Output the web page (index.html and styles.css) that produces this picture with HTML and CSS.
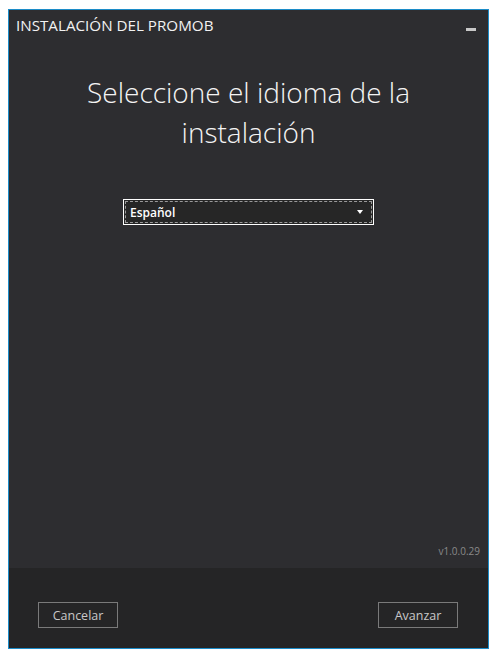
FILE: index.html
```html
<!DOCTYPE html>
<html lang="es">
<head>
    <meta charset="UTF-8">
    <title>Instalación del Promob</title>
    <link rel="stylesheet" href="styles.css">
</head>
<body>
    <div class="window">
        <div class="title-bar">
            <span class="title">INSTALACIÓN DEL PROMOB</span>
            <span class="minimize"></span>
        </div>
        <div class="content">
            <h1>Seleccione el idioma de la instalación</h1>
            <div class="select">
                <div class="select-inner">
                    <span>Español</span>
                    <span class="arrow"></span>
                </div>
            </div>
            <div class="version">v1.0.0.29</div>
        </div>
        <div class="footer">
            <button>Cancelar</button>
            <button>Avanzar</button>
        </div>
    </div>
</body>
</html>
```

FILE: styles.css
```css
/* General */
body {
    margin: 0;
    padding: 9px 0 0 8px;
    background-color: #ffffff;
    font-family: "Open Sans", "Noto Sans", sans-serif;
}

/* Window */
.window {
    width: 479px;
    height: 638px;
    border: 1px solid #1c8cc8;
    background-color: #2d2d30;
    display: flex;
    flex-direction: column;
}

.title-bar {
    height: 32px;
    display: flex;
    align-items: center;
    justify-content: space-between;
    padding: 0 12px 0 7px;
}

.title {
    color: #f2f2f2;
    font-size: 15.2px;
    margin-top: -2px;
}

.minimize {
    width: 10px;
    height: 3px;
    background-color: #c8c8c8;
    margin-top: 6px;
}

/* Content */
.content {
    flex: 1;
    display: flex;
    flex-direction: column;
    align-items: center;
}

h1 {
    margin: 30px 0 0;
    width: 360px;
    text-align: center;
    color: #f4f4f4;
    font-weight: 300;
    font-size: 28px;
    line-height: 40px;
}

.select {
    margin-top: 47px;
    width: 247px;
    height: 22px;
    border: 1px solid #ffffff;
    background-color: #262626;
    padding: 1px;
    box-sizing: content-box;
}

.select-inner {
    height: 20px;
    border: 1px dashed #9a9a9a;
    display: flex;
    align-items: center;
    justify-content: space-between;
    padding: 0 8px 0 4px;
    color: #ffffff;
    font-size: 12px;
    font-weight: 600;
}

.arrow {
    width: 0;
    height: 0;
    border-left: 3px solid transparent;
    border-right: 3px solid transparent;
    border-top: 4px solid #ffffff;
}

.version {
    margin-top: auto;
    align-self: flex-end;
    margin-right: 8px;
    margin-bottom: 10px;
    color: #8a8a8a;
    font-size: 10px;
}

/* Footer */
.footer {
    height: 80px;
    background-color: #252526;
    display: flex;
    justify-content: space-between;
    align-items: flex-start;
    padding: 34px 30px 0 29px;
    box-sizing: border-box;
}

button {
    width: 80px;
    height: 26px;
    background-color: transparent;
    border: 1px solid #7a7a7a;
    color: #c8c8c8;
    font-family: "Open Sans", "Noto Sans", sans-serif;
    font-size: 12.5px;
    padding: 0;
}
```
